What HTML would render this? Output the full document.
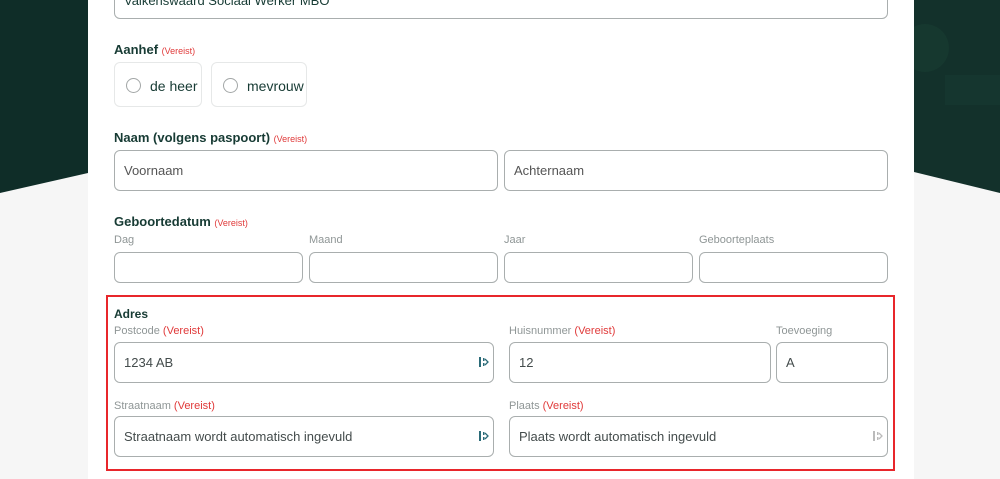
<!DOCTYPE html>
<html><head><meta charset="utf-8">
<style>
*{box-sizing:border-box;margin:0;padding:0}
body{width:1000px;height:479px;overflow:hidden;background:#f6f6f6;font-family:"Liberation Sans",sans-serif;position:relative}
.a{position:absolute}
.card{left:88px;top:0;width:826px;height:479px;background:#fff}
.in{position:absolute;border:1.5px solid #a9aeae;border-radius:6px;background:#fff;font-size:13px;color:#444c4c;padding-left:9px;display:flex;align-items:center}
.h{position:absolute;font-size:13px;font-weight:bold;color:#173b34}
.h span,.l span{color:#e03a3a;font-weight:normal}
.h span{font-size:9px}
.l{position:absolute;font-size:11px;color:#8f9696}
.rb{position:absolute;border:1px solid #e6e8e8;border-radius:6px;background:#fff;font-size:14px;color:#173b34}
.rb i{position:absolute;left:11px;top:15px;width:15px;height:15px;border:1.5px solid #a3a7a7;border-radius:50%}
.rb b{position:absolute;left:35px;top:15px;font-weight:normal}
.ic{position:absolute;right:3px;top:13px}
</style></head><body>
<svg class="a" style="left:0;top:0" width="1000" height="479">
<polygon points="0,0 88,0 88,173 0,193" fill="#0f2d28"/>
<polygon points="914,0 1000,0 1000,193 914,172" fill="#13312b"/>
<circle cx="925" cy="48" r="24" fill="#16382f"/>
<rect x="945" y="75" width="55" height="30" fill="#15362f"/>
</svg>
<div class="a card"></div>
<div class="in" style="left:114px;top:-20px;width:774px;height:39px;color:#173b34;align-items:flex-start;padding-top:12px">Valkenswaard Sociaal Werker MBO</div>

<div class="h" style="left:114px;top:42px">Aanhef <span>(Vereist)</span></div>
<div class="rb" style="left:114px;top:62px;width:88px;height:45px"><i></i><b>de heer</b></div>
<div class="rb" style="left:211px;top:62px;width:96px;height:45px"><i></i><b>mevrouw</b></div>

<div class="h" style="left:114px;top:130px">Naam (volgens paspoort) <span>(Vereist)</span></div>
<div class="in" style="left:114px;top:150px;width:384px;height:41px;color:#555">Voornaam</div>
<div class="in" style="left:504px;top:150px;width:384px;height:41px;color:#555">Achternaam</div>

<div class="h" style="left:114px;top:214px">Geboortedatum <span>(Vereist)</span></div>
<div class="l" style="left:114px;top:234px">Dag</div>
<div class="l" style="left:309px;top:234px">Maand</div>
<div class="l" style="left:504px;top:234px">Jaar</div>
<div class="l" style="left:699px;top:234px">Geboorteplaats</div>
<div class="in" style="left:114px;top:252px;width:189px;height:31px"></div>
<div class="in" style="left:309px;top:252px;width:189px;height:31px"></div>
<div class="in" style="left:504px;top:252px;width:189px;height:31px"></div>
<div class="in" style="left:699px;top:252px;width:189px;height:31px"></div>

<div class="a" style="left:106px;top:295px;width:789px;height:176px;border:2px solid #e8262b"></div>
<div class="h" style="left:114px;top:307px;font-size:12px">Adres</div>
<div class="l" style="left:114px;top:325px">Postcode <span>(Vereist)</span></div>
<div class="l" style="left:509px;top:325px">Huisnummer <span>(Vereist)</span></div>
<div class="l" style="left:776px;top:325px">Toevoeging</div>
<div class="in" style="left:114px;top:342px;width:380px;height:41px">1234 AB<svg class="ic" width="12" height="12" viewBox="0 0 12 12"><rect x="1" y="1" width="2" height="10" fill="#2b6b78"/><rect x="5" y="2" width="1.5" height="3" fill="#2b6b78"/><rect x="5" y="7" width="1.5" height="3" fill="#2b6b78"/><path d="M7 3 L10 6 L7 9" fill="none" stroke="#2b6b78" stroke-width="1.3"/></svg></div>
<div class="in" style="left:509px;top:342px;width:262px;height:41px">12</div>
<div class="in" style="left:776px;top:342px;width:112px;height:41px">A</div>
<div class="l" style="left:114px;top:400px">Straatnaam <span>(Vereist)</span></div>
<div class="l" style="left:509px;top:400px">Plaats <span>(Vereist)</span></div>
<div class="in" style="left:114px;top:416px;width:380px;height:41px">Straatnaam wordt automatisch ingevuld<svg class="ic" width="12" height="12" viewBox="0 0 12 12"><rect x="1" y="1" width="2" height="10" fill="#2b6b78"/><rect x="5" y="2" width="1.5" height="3" fill="#2b6b78"/><rect x="5" y="7" width="1.5" height="3" fill="#2b6b78"/><path d="M7 3 L10 6 L7 9" fill="none" stroke="#2b6b78" stroke-width="1.3"/></svg></div>
<div class="in" style="left:509px;top:416px;width:379px;height:41px">Plaats wordt automatisch ingevuld<svg class="ic" width="12" height="12" viewBox="0 0 12 12"><rect x="1" y="1" width="2" height="10" fill="#bbb"/><rect x="5" y="2" width="1.5" height="3" fill="#bbb"/><rect x="5" y="7" width="1.5" height="3" fill="#bbb"/><path d="M7 3 L10 6 L7 9" fill="none" stroke="#bbb" stroke-width="1.3"/></svg></div>
</body></html>
